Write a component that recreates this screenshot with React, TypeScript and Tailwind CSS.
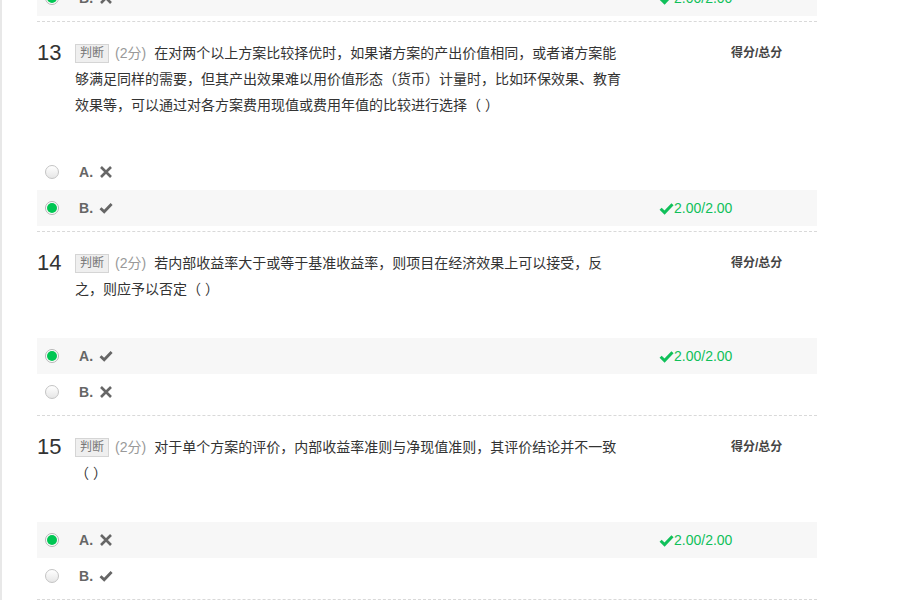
import React from "react";

type Opt = { key: string; correct: boolean; checked: boolean };
type Q = { no: number; text: string; options: Opt[] };

const questions: Q[] = [
  {
    no: 13,
    text: "在对两个以上方案比较择优时，如果诸方案的产出价值相同，或者诸方案能够满足同样的需要，但其产出效果难以用价值形态（货币）计量时，比如环保效果、教育效果等，可以通过对各方案费用现值或费用年值的比较进行选择（\u00a0）",
    options: [
      { key: "A", correct: false, checked: false },
      { key: "B", correct: true, checked: true },
    ],
  },
  {
    no: 14,
    text: "若内部收益率大于或等于基准收益率，则项目在经济效果上可以接受，反之，则应予以否定（\u00a0）",
    options: [
      { key: "A", correct: true, checked: true },
      { key: "B", correct: false, checked: false },
    ],
  },
  {
    no: 15,
    text: "对于单个方案的评价，内部收益率准则与净现值准则，其评价结论并不一致（\u00a0）",
    options: [
      { key: "A", correct: false, checked: true },
      { key: "B", correct: true, checked: false },
    ],
  },
];

const font = "font-['Liberation_Sans','Noto_Sans_CJK_SC',sans-serif]";

function Cross() {
  return (
    <svg width="14" height="14" viewBox="0 0 14 14" className="block">
      <path d="M2 2 L12 12 M12 2 L2 12" stroke="#666" strokeWidth="2.6" strokeLinecap="butt" />
    </svg>
  );
}

function Check({ color = "#666", size = 14 }: { color?: string; size?: number }) {
  return (
    <svg width={size} height={size} viewBox="0 0 14 14" className="block">
      <path d="M1.5 7.2 L5.2 10.8 L12.6 3" fill="none" stroke={color} strokeWidth="2.8" />
    </svg>
  );
}

function Radio({ checked }: { checked: boolean }) {
  return checked ? (
    <span className="flex h-[14px] w-[14px] items-center justify-center rounded-full border border-[#b5b5b5] bg-white">
      <span className="h-[10px] w-[10px] rounded-full bg-[#00c653]" />
    </span>
  ) : (
    <span className="h-[14px] w-[14px] rounded-full border border-[#c4c4c4] bg-gradient-to-b from-white to-[#e6e6e6]" />
  );
}

function OptionRow({ opt }: { opt: Opt }) {
  return (
    <div className={`flex h-9 items-center ${opt.checked ? "bg-[#f7f7f7]" : ""}`}>
      <div className="flex w-[622px] items-center pl-2">
        <Radio checked={opt.checked} />
        <span className="ml-[20px] mr-[6px] text-[14px] font-bold text-[#666]">{opt.key}.</span>
        {opt.correct ? <Check /> : <Cross />}
      </div>
      {opt.checked ? (
        <div className="flex items-center text-[14px] text-[#10c05a]">
          <Check color="#10c05a" size={15} />
          <span>2.00/2.00</span>
        </div>
      ) : null}
    </div>
  );
}

function Question({ q }: { q: Q }) {
  return (
    <div className="border-b border-dashed border-[#d9d9d9] pb-[5px] pt-[18px]">
      <div className="flex">
        <div className="w-[38px] text-[22px] leading-[26px] text-[#333]">{q.no}</div>
        <div className="w-[548px] text-[14px] leading-[26px] text-[#333]">
          <span className="mr-[6px] inline-block border border-[#d5d5d5] bg-[#efefef] px-[4px] align-top mt-[4px] text-[12px] leading-[17px] text-[#777]">判断</span>
          <span className="mr-[8px] text-[#999]">(2分)</span>
          {q.text}
        </div>
        <div className="ml-[108px] text-[12px] font-bold leading-[26px] text-[#444]">得分/总分</div>
      </div>
      <div className="mt-[36px]">
        {q.options.map((o) => (
          <OptionRow key={o.key} opt={o} />
        ))}
      </div>
    </div>
  );
}

export default function App() {
  return (
    <div className={`h-[600px] overflow-hidden border-l-2 border-[#e8e8e8] bg-white ${font}`}>
      <div className="ml-[35px] w-[780px]">
        <div className="-mt-[20px] border-b border-dashed border-[#d9d9d9] pb-[5px]">
          <OptionRow opt={{ key: "B", correct: false, checked: true }} />
        </div>
        {questions.map((q) => (
          <Question key={q.no} q={q} />
        ))}
      </div>
    </div>
  );
}
